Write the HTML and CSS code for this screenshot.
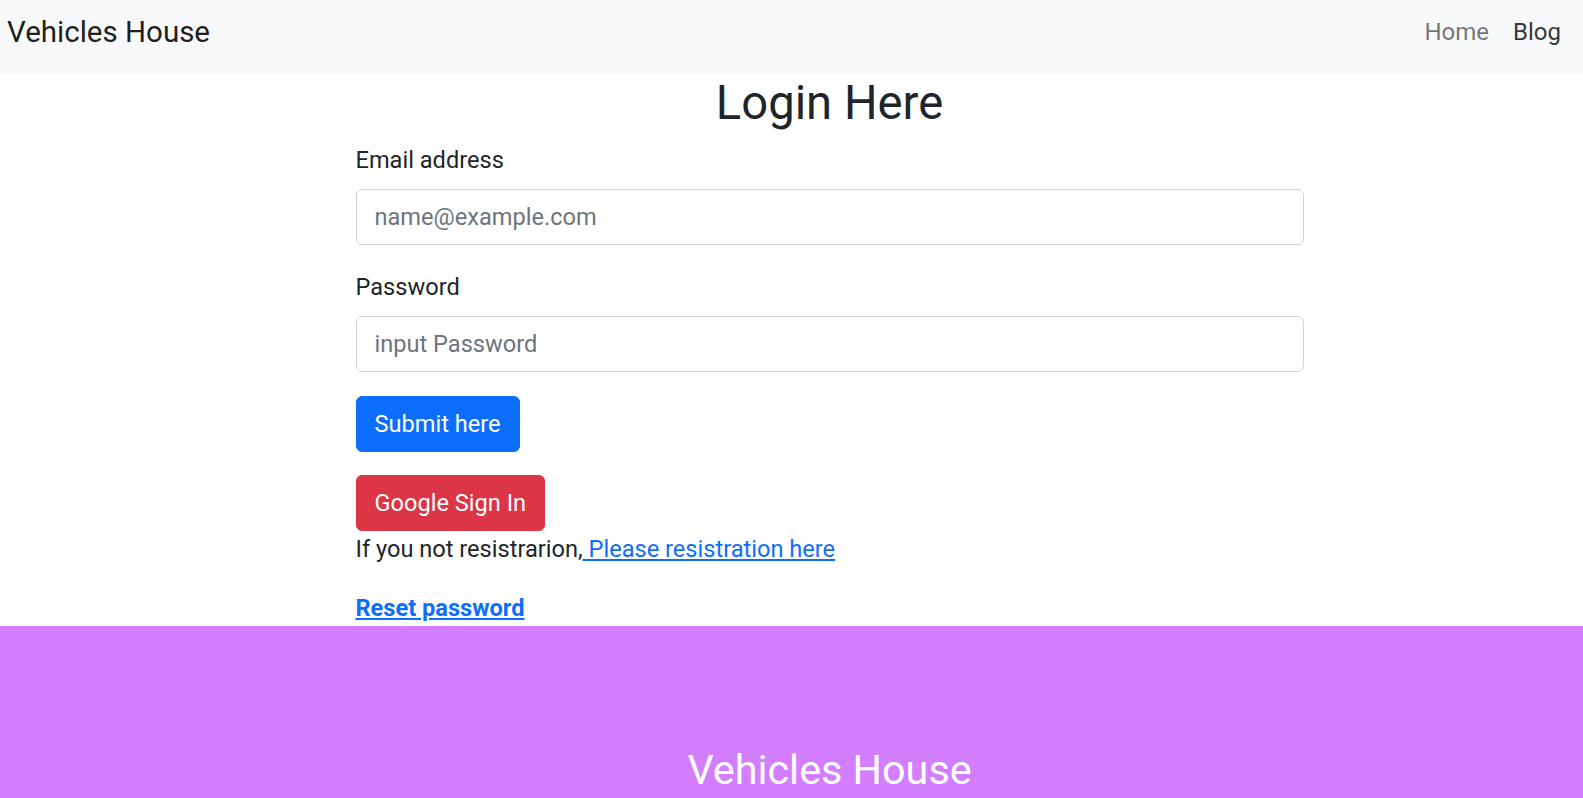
FILE: index.html
```html
<!DOCTYPE html>
<html lang="en">
<head>
<meta charset="utf-8">
<title>Login - Vehicles House</title>
<link rel="stylesheet" href="styles.css">
</head>
<body>
<nav class="navbar">
  <a class="brand" href="#">Vehicles House</a>
  <ul class="nav-links">
    <li><a class="nav-link" href="#">Home</a></li>
    <li><a class="nav-link active" href="#">Blog</a></li>
  </ul>
</nav>
<main class="page">
  <div class="container">
    <h2 class="title">Login Here</h2>
    <form class="login-form">
      <div class="field">
        <label class="form-label" for="email">Email address</label>
        <input class="form-control" type="email" id="email" placeholder="name@example.com">
      </div>
      <div class="field">
        <label class="form-label" for="password">Password</label>
        <input class="form-control" type="password" id="password" placeholder="input Password">
      </div>
      <button class="btn btn-primary" type="submit">Submit here</button>
    </form>
    <div class="social">
      <button class="btn btn-danger" type="button">Google Sign In</button>
    </div>
    <p class="register">If you not resistrarion,<a href="#"> Please resistration here</a></p>
    <p class="reset"><a href="#">Reset password</a></p>
  </div>
</main>
<footer class="footer">
  <div class="footer-inner">
    <h3 class="footer-title">Vehicles House</h3>
  </div>
</footer>
</body>
</html>
```

FILE: styles.css
```css
* {
  box-sizing: border-box;
}

html, body {
  margin: 0;
  padding: 0;
}

body {
  font-family: Roboto, "Liberation Sans", Arial, sans-serif;
  font-size: 23.6px;
  line-height: 36px;
  color: #212529;
  background: #fff;
}

a {
  color: #0d6efd;
}

.navbar {
  height: 74px;
  background: #f8f9fa;
  display: flex;
  justify-content: space-between;
  align-items: flex-start;
  padding: 0 10px 0 7px;
}

.brand {
  font-size: 29.5px;
  line-height: 45px;
  padding-top: 10px;
  color: rgba(0, 0, 0, 0.9);
  text-decoration: none;
}

.nav-links {
  list-style: none;
  margin: 0;
  padding: 14px 0 0 0;
  display: flex;
}

.nav-link {
  display: block;
  padding: 0 12px;
  font-size: 24px;
  line-height: 36px;
  color: rgba(0, 0, 0, 0.55);
  text-decoration: none;
}

.nav-link.active {
  color: rgba(0, 0, 0, 0.8);
}

.page {
  padding-left: 76px;
}

.container {
  width: 948px;
  margin: 0 auto;
}

.title {
  margin: 0 0 10px 0;
  font-size: 47.2px;
  font-weight: 400;
  line-height: 58px;
  text-align: center;
}

.login-form {
  margin: 0;
}

.field {
  margin-bottom: 24px;
}

.form-label {
  display: block;
  margin-bottom: 11px;
  line-height: 36px;
}

.form-control {
  display: block;
  width: 100%;
  height: 56px;
  padding: 9px 18px;
  font-family: inherit;
  font-size: 23.6px;
  line-height: 36px;
  color: #212529;
  background: #fff;
  border: 1px solid #ced4da;
  border-radius: 6px;
}

.form-control::placeholder {
  color: #6c757d;
}

.btn {
  display: inline-block;
  height: 56px;
  padding: 9px 18px;
  font-family: inherit;
  font-size: 23.6px;
  line-height: 36px;
  color: #fff;
  border: 1px solid transparent;
  border-radius: 6px;
  cursor: pointer;
}

.btn-primary {
  background: #0d6efd;
  border-color: #0d6efd;
}

.btn-danger {
  background: #dc3545;
  border-color: #dc3545;
}

.social {
  margin-top: 23px;
  height: 56px;
}

.register {
  margin: 0 0 23px 0;
}

.reset {
  margin: 0;
  font-weight: 700;
}

.footer {
  background: #d27efe;
  height: 200px;
  padding-left: 76px;
}

.footer-inner {
  padding-top: 119px;
  text-align: center;
}

.footer-title {
  margin: 0;
  font-size: 41.3px;
  font-weight: 400;
  line-height: 50px;
  color: #fff;
}
```
